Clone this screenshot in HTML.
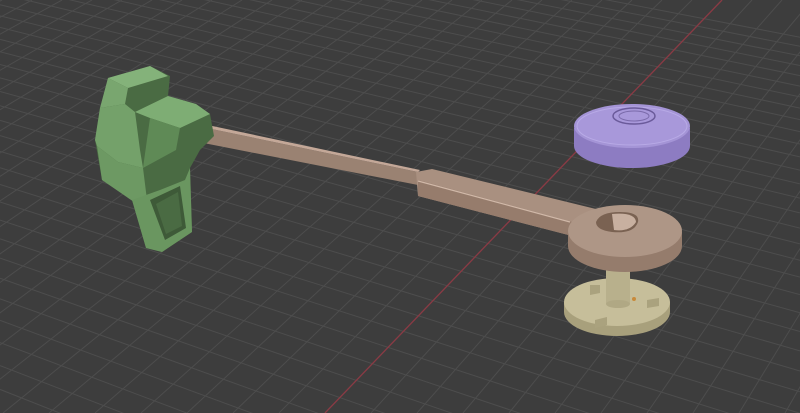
<!DOCTYPE html>
<html><head><meta charset="utf-8"><style>
html,body{margin:0;padding:0;background:#3d3d3d;overflow:hidden;width:800px;height:413px}
svg{display:block;overflow:hidden}
</style></head><body>
<svg id="s" width="800" height="413" viewBox="0 0 800 413" xmlns="http://www.w3.org/2000/svg">
<rect width="800" height="413" fill="#3d3d3d"/>
<g id="grid" stroke="#4d4d4d" stroke-width="1"></g>
<line x1="325" y1="413" x2="722" y2="0" stroke="#8a3a44" stroke-width="1.3"/>
<path d="M574 128 L574 146 A58 22 0 0 0 690 146 L690 128 Z" fill="#8d7cc2"/>
<ellipse cx="632" cy="126" rx="58" ry="22" fill="#a494d6"/>
<ellipse cx="632" cy="126" rx="55" ry="19" fill="#a898da" stroke="#b8aae6" stroke-width="1"/>
<ellipse cx="634" cy="116" rx="21" ry="8" fill="none" stroke="#6a5a9a" stroke-width="1.5"/>
<ellipse cx="634" cy="116" rx="15" ry="5" fill="none" stroke="#7a6aaa" stroke-width="1"/>
<path d="M564 302 L564 312 A53 24 0 0 0 670 312 L670 302 Z" fill="#a8a07c"/>
<ellipse cx="617" cy="302" rx="53" ry="24" fill="#c6be9a"/>
<path d="M590 285 l10 0 l0 8 l-10 2 z M647 300 l12 -2 l0 8 l-12 2 z M595 320 l12 -3 l0 8 l-12 3 z" fill="#aaa27e"/>
<rect x="606" y="262" width="24" height="42" fill="#b8b08c"/>
<ellipse cx="618" cy="304" rx="12" ry="4" fill="#b0a884"/>
<circle cx="634" cy="299" r="2" fill="#c88a3a"/>
<polygon points="178,122 418,172 418,185 178,138" fill="#9a8272"/>
<polygon points="178,122 184,120 420,170 418,172" fill="#c4a898"/>
<polygon points="416,172 432,169 600,210 580,238 418,196" fill="#a99080"/>
<polygon points="418,180 580,224 580,238 418,196" fill="#967c6c"/>
<line x1="418" y1="181" x2="570" y2="222" stroke="#d0b8a8" stroke-width="1.2"/>
<path d="M568 232 L568 246 A57 26 0 0 0 682 246 L682 232 Z" fill="#957c6c"/>
<ellipse cx="625" cy="231" rx="57" ry="26" fill="#ae9686"/>
<path d="M596 222 Q600 212 620 212 Q640 212 638 222 Q634 234 612 232 Q596 230 596 222 Z" fill="#7a6252"/>
<path d="M612 214 Q635 212 636 222 Q630 232 614 230 Z" fill="#c8b0a0"/>
<polygon points="100,108 108,78 150,66 170,76 168,96 196,104 210,114 214,136 200,150 190,168 192,232 162,252 146,248 132,200 102,180 95,140" fill="#4a6b43"/>
<polygon points="108,78 150,66 168,76 128,88" fill="#84b27a"/>
<polygon points="100,108 108,78 128,88 125,104" fill="#79a66f"/>
<polygon points="100,108 125,104 135,112 140,150 143,168 118,162 97,146 95,140" fill="#74a16a"/>
<polygon points="97,146 118,162 143,168 148,208 134,202 102,180" fill="#6d9963"/>
<polygon points="135,112 168,96 196,104 210,114 180,128 150,118" fill="#7ead74"/>
<polygon points="143,168 150,118 180,128 176,150" fill="#5f8a56"/>
<polygon points="132,200 160,190 185,180 190,168 192,232 162,252 146,248" fill="#6a9660"/>
<polygon points="150,200 180,186 186,228 165,240" fill="#3e5a38"/>
<polygon points="156,204 178,192 182,226 166,234" fill="#4a6b43"/>
</svg>
<script>
var g=document.getElementById('grid'),h='';
for(var i=-30;i<=40;i++){var bx=325+i*46,tx=722+i*30;h+='<line x1="'+bx+'" y1="413" x2="'+tx+'" y2="0"/>';}
var vx=-2500,vy=-600;
var y=-40,dy=8;
for(var k=0;k<80&&y<700;k++){
  var s=(y-vy)/(400-vx);
  var y0=vy+s*(0-vx), y1=vy+s*(800-vx);
  h+='<line x1="0" y1="'+y0.toFixed(1)+'" x2="800" y2="'+y1.toFixed(1)+'"/>';
  y+=dy; dy*=1.035;
}
g.innerHTML=h;
</script>
</body></html>
